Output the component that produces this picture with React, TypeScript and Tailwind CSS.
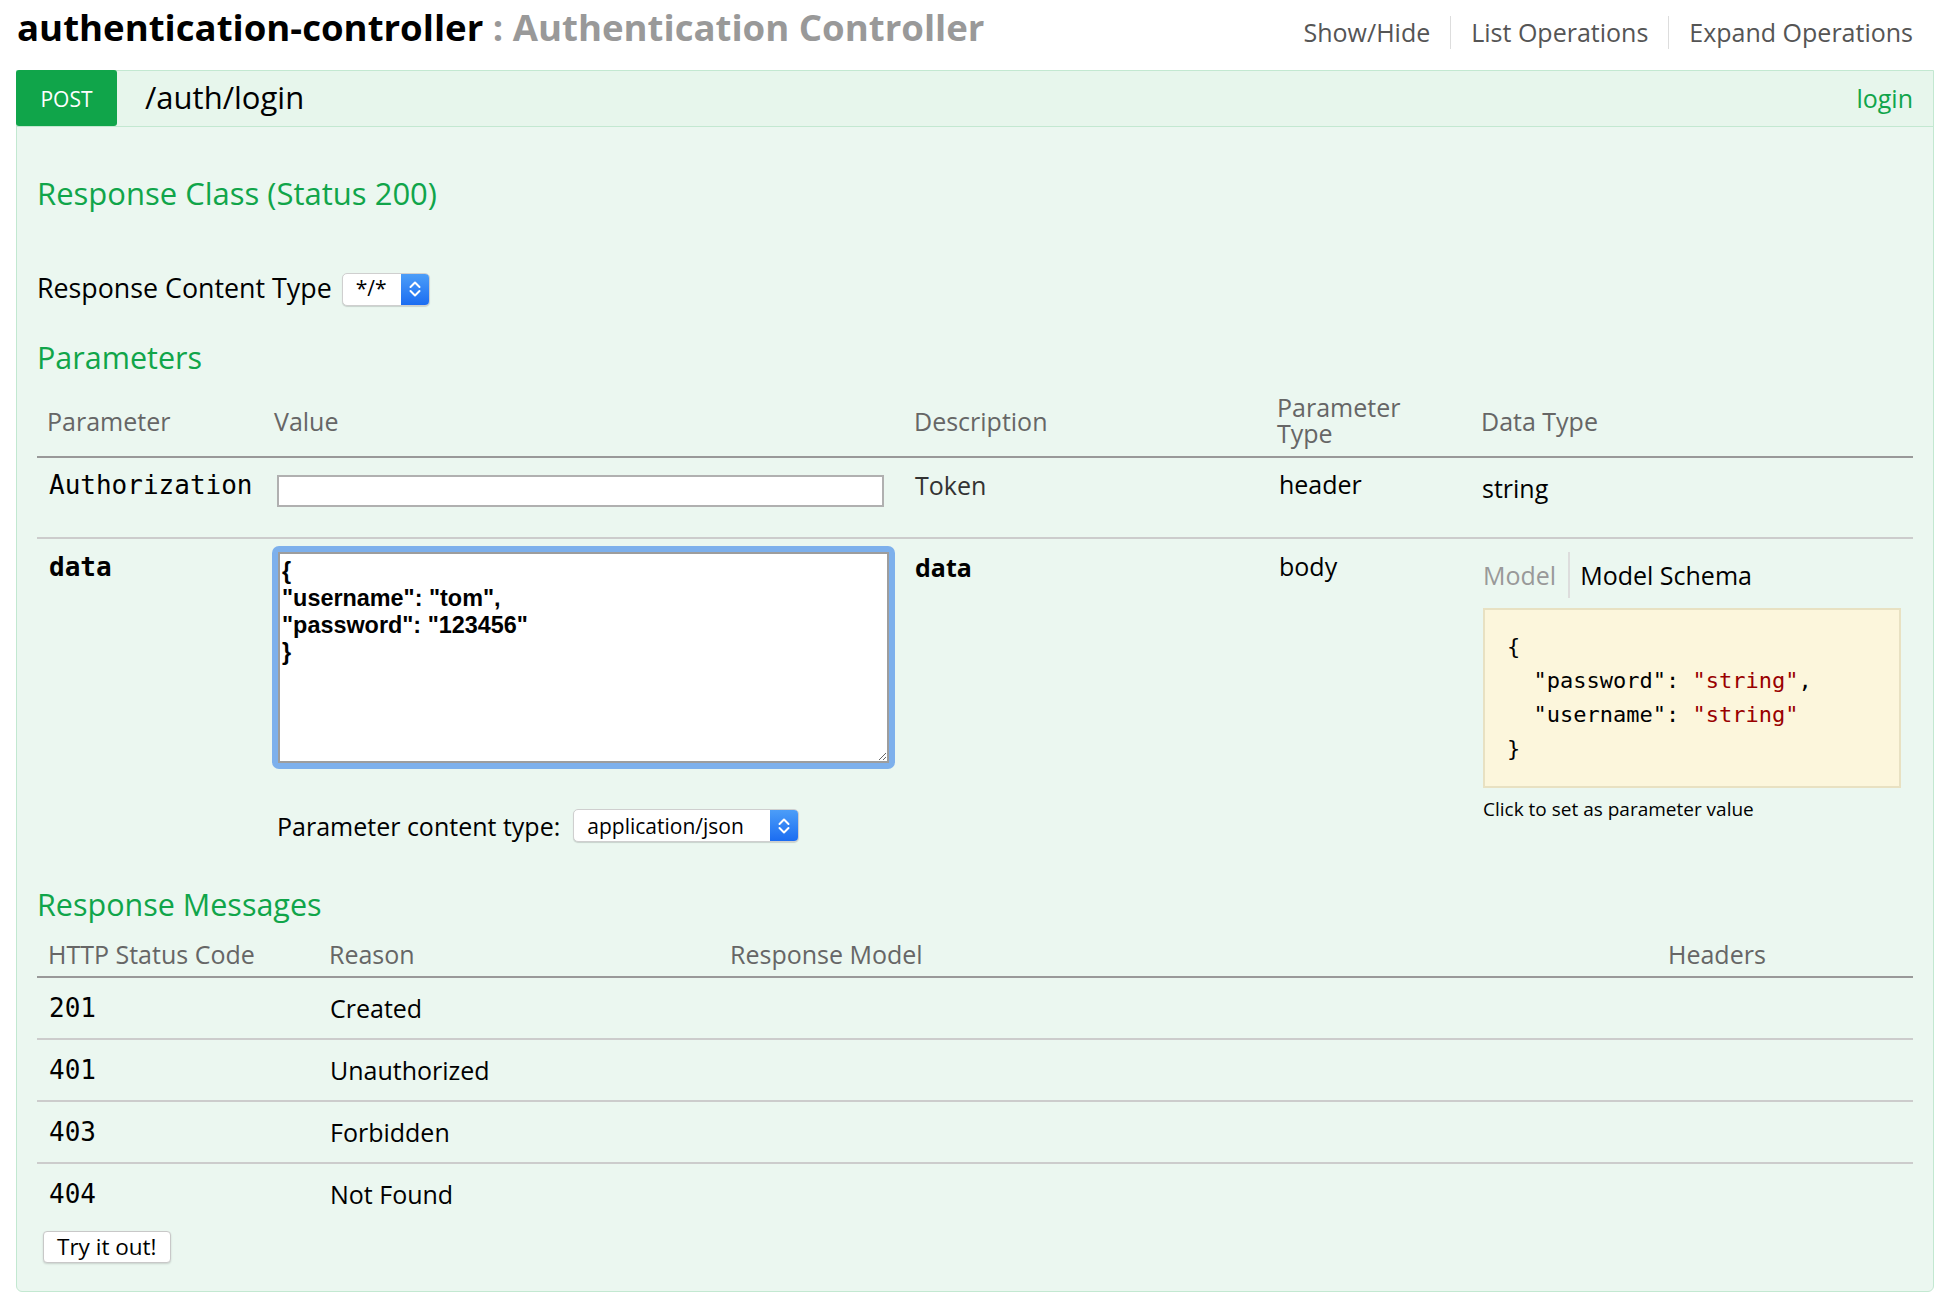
import React from 'react';

// small up/down chevrons used by the native-looking select boxes
const Stepper: React.FC = () => (
  <svg width="14" height="22" viewBox="0 0 14 22" fill="none">
    <path d="M2.5 9 L7 4.5 L11.5 9" stroke="white" strokeWidth="2" strokeLinecap="round" strokeLinejoin="round" />
    <path d="M2.5 13 L7 17.5 L11.5 13" stroke="white" strokeWidth="2" strokeLinecap="round" strokeLinejoin="round" />
  </svg>
);

interface SelectProps {
  value: string;
  widthClass: string;
}

const MacSelect: React.FC<SelectProps> = ({ value, widthClass }) => (
  <div className={`flex h-[33px] ${widthClass} overflow-hidden rounded-[5px] border border-[#cfcfcf] bg-white shadow-[0_1px_1px_rgba(0,0,0,0.15)]`}>
    <div className="flex flex-1 items-center pl-[13px] text-[21px] text-black">{value}</div>
    <div className="flex w-[28px] items-center justify-center bg-gradient-to-b from-[#4c9df8] to-[#1b6cf1]">
      <Stepper />
    </div>
  </div>
);

const responses = [
  { code: '201', reason: 'Created' },
  { code: '401', reason: 'Unauthorized' },
  { code: '403', reason: 'Forbidden' },
  { code: '404', reason: 'Not Found' },
];

export default function App() {
  return (
    <div className="min-h-[1308px] w-full bg-white px-[16px] font-['Open_Sans',sans-serif] text-black">
      {/* ===== Resource heading ===== */}
      <div className="flex h-[70px] items-start justify-between">
        <h2 className="pl-[1px] pt-[5px] text-[36.6px] font-bold leading-[44px]">
          <span className="text-black">authentication-controller</span>
          <span className="text-[#999]"> : Authentication Controller</span>
        </h2>
        <div className="flex items-center pr-[21px] pt-[16px] text-[25px] leading-[33px] text-[#555]">
          <span>Show/Hide</span>
          <span className="mx-[20px] h-[33px] w-px bg-[#ddd]" />
          <span>List Operations</span>
          <span className="mx-[20px] h-[33px] w-px bg-[#ddd]" />
          <span>Expand Operations</span>
        </div>
      </div>

      {/* ===== Operation panel ===== */}
      <div className="rounded-b-[6px] border border-[#c3e8d1] bg-[#ebf7f0]">
        <div className="flex h-[56px] items-center border-b border-[#c3e8d1] bg-[#e7f6ec]">
          <div className="-ml-px -mt-px flex h-[56px] w-[101px] items-center justify-center rounded-[3px] bg-[#10a54a] pt-[4px] text-[21px] text-white">
            POST
          </div>
          <span className="ml-[28px] pb-[3px] text-[31px] leading-[40px] text-black">/auth/login</span>
          <span className="ml-auto pr-[20px] text-[25px] text-[#10a54a]">login</span>
        </div>

        <div className="px-[20px] pb-[28px]">
          <h4 className="mt-[48px] text-[31px] leading-[36px] text-[#10a54a]">Response Class (Status 200)</h4>

          <div className="mt-[61px] flex h-[32px] items-center">
            <span className="text-[26.8px]">Response Content Type</span>
            <div className="ml-[10px] mt-[2px]">
              <MacSelect value="*/*" widthClass="w-[88px]" />
            </div>
          </div>

          <h4 className="mt-[35px] text-[30.5px] leading-[36px] text-[#10a54a]">Parameters</h4>

          {/* parameters table */}
          <div className="mt-[13px] grid h-[70px] grid-cols-[227px_640px_363px_204px_1fr] items-center border-b-2 border-[#999] text-[25px] text-[#666]">
            <div className="pl-[10px]">Parameter</div>
            <div className="pl-[10px]">Value</div>
            <div className="pl-[10px]">Description</div>
            <div className="flex flex-col pl-[10px] pb-[3px] leading-[27px]">
              <span>Parameter</span>
              <span className="-mt-[1px]">Type</span>
            </div>
            <div className="pl-[10px]">Data Type</div>
          </div>

          <div className="grid h-[81px] grid-cols-[227px_640px_363px_204px_1fr] items-start border-b-2 border-[#ccc] text-[25px] leading-[32px]">
            <div className="pl-[12px] pt-[11px] font-['DejaVu_Sans_Mono',monospace] text-[26px]">Authorization</div>
            <div className="pl-[10px]">
              <input className="ml-[3px] mt-[17px] block h-[32px] w-[607px] border-2 border-[#b0b0b0] bg-white outline-none" />
            </div>
            <div className="pl-[11px] pt-[11px] text-[#333]">Token</div>
            <div className="pl-[12px] pt-[10px]">header</div>
            <div className="pl-[11px] pt-[14px]">string</div>
          </div>

          <div className="grid grid-cols-[227px_640px_363px_204px_1fr] items-start text-[25px] leading-[32px]">
            <div className="pl-[12px] pt-[12px] font-['DejaVu_Sans_Mono',monospace] text-[26px] font-bold">data</div>
            <div className="pl-[10px]">
              <div className="ml-[-2px] mt-[7px] w-[623px] rounded-[7px] bg-[#7db0ec] p-[6px]">
                <textarea
                  className="block h-[211px] w-full resize border-2 border-[#9d9d9d] bg-white px-[2px] py-[4px] font-['Liberation_Sans',Arial,sans-serif] text-[23.4px] font-bold leading-[27px] text-black outline-none"
                  defaultValue={'{\n"username": "tom",\n"password": "123456"\n}'}
                />
              </div>
              <div className="mt-[40px] flex items-center">
                <span className="ml-[3px] text-[25px]">Parameter content type:</span>
                <div className="ml-[13px]">
                  <MacSelect value="application/json" widthClass="w-[226px]" />
                </div>
              </div>
            </div>
            <div className="pl-[11px] pt-[12px] font-bold">data</div>
            <div className="pl-[12px] pt-[11px]">body</div>
            <div className="pl-[12px] pt-[13px]">
              <div className="flex h-[46px] items-center">
                <span className="text-[#999]">Model</span>
                <span className="ml-[12px] mr-[10px] h-[46px] w-[2px] bg-[#ddd]" />
                <span>Model Schema</span>
              </div>
              <div className="mt-[10px] w-[418px] border-2 border-[#e8e1c2] bg-[#fcf6dc] px-[22px] py-[20px] font-['DejaVu_Sans_Mono',monospace] text-[22px] leading-[34px] whitespace-pre">
                <div>{'{'}</div>
                <div>
                  {'  "password": '}
                  <span className="text-[#990000]">"string"</span>,
                </div>
                <div>
                  {'  "username": '}
                  <span className="text-[#990000]">"string"</span>
                </div>
                <div>{'}'}</div>
              </div>
              <div className="mt-[9px] text-[19px] leading-[24px]">Click to set as parameter value</div>
            </div>
          </div>

          <h4 className="mt-[44px] text-[30.5px] leading-[36px] text-[#10a54a]">Response Messages</h4>

          {/* response messages table */}
          <div className="grid h-[56px] grid-cols-[281px_401px_938px_1fr] items-end border-b-2 border-[#999] pb-[6px] text-[25px] leading-[32px] text-[#666]">
            <div className="pl-[11px]">HTTP Status Code</div>
            <div className="pl-[11px]">Reason</div>
            <div className="pl-[11px]">Response Model</div>
            <div className="pl-[11px]">Headers</div>
          </div>
          {responses.map((r, i) => (
            <div
              key={r.code}
              className={`grid grid-cols-[281px_401px_938px_1fr] items-center text-[25px] leading-[32px] ${
                i < responses.length - 1 ? 'h-[62px] border-b-2 border-[#ccc]' : 'h-[60px]'
              }`}
            >
              <div className="pl-[12px] font-['DejaVu_Sans_Mono',monospace] text-[26px]">{r.code}</div>
              <div className="pl-[12px]">{r.reason}</div>
              <div />
              <div />
            </div>
          ))}

          <button className="ml-[6px] mt-[7px] h-[32px] rounded-[4px] border border-[#c8c8c8] bg-white px-[13px] text-[22.5px] leading-[28px] text-black shadow-[0_1px_2px_rgba(0,0,0,0.15)]">
            Try it out!
          </button>
        </div>
      </div>
    </div>
  );
}
